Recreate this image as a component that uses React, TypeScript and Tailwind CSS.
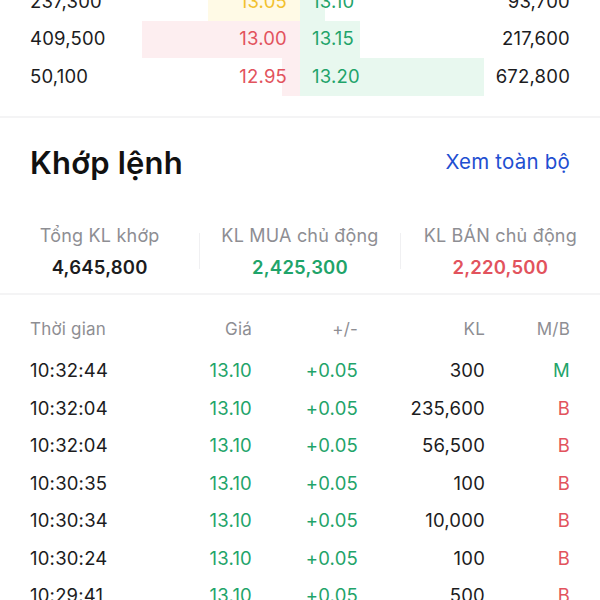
import React from 'react';

type BookRow = {
  bidVol: string;
  bid: string;
  ask: string;
  askVol: string;
  bidBar: number;
  askBar: number;
  bidTone: 'red' | 'yellow';
};

const book: BookRow[] = [
  { bidVol: '237,300', bid: '13.05', ask: '13.10', askVol: '93,700', bidBar: 92, askBar: 25, bidTone: 'yellow' },
  { bidVol: '409,500', bid: '13.00', ask: '13.15', askVol: '217,600', bidBar: 158, askBar: 60, bidTone: 'red' },
  { bidVol: '50,100', bid: '12.95', ask: '13.20', askVol: '672,800', bidBar: 18, askBar: 184, bidTone: 'red' },
];

const trades = [
  { time: '10:32:44', vol: '300', side: 'M' },
  { time: '10:32:04', vol: '235,600', side: 'B' },
  { time: '10:32:04', vol: '56,500', side: 'B' },
  { time: '10:30:35', vol: '100', side: 'B' },
  { time: '10:30:34', vol: '10,000', side: 'B' },
  { time: '10:30:24', vol: '100', side: 'B' },
  { time: '10:29:41', vol: '500', side: 'B' },
];

function OrderBook() {
  return (
    <div className="-mt-[17px] pb-[20px]">
      {book.map((r, i) => (
        <div key={i} className="flex h-[37.5px] text-[18.5px]">
          {/* bid side */}
          <div className="relative flex w-1/2 items-center justify-between pl-[30px] pr-[13px]">
            <div
              className={`absolute right-0 top-0 h-full ${r.bidTone === 'yellow' ? 'bg-[#fffae6]' : 'bg-[#fdeef0]'}`}
              style={{ width: r.bidBar }}
            />
            <span className="relative text-[#1c1c1e]">{r.bidVol}</span>
            <span className={`relative ${r.bidTone === 'yellow' ? 'text-[#f2c12e]' : 'text-[#e2535d]'}`}>{r.bid}</span>
          </div>
          {/* ask side */}
          <div className="relative flex w-1/2 items-center justify-between pl-[12px] pr-[30px]">
            <div className="absolute left-0 top-0 h-full bg-[#e8f8ef]" style={{ width: r.askBar }} />
            <span className="relative text-[#1fa46a]">{r.ask}</span>
            <span className="relative text-[#1c1c1e]">{r.askVol}</span>
          </div>
        </div>
      ))}
    </div>
  );
}

function Stat({ label, value, color }: { label: string; value: string; color: string }) {
  return (
    <div className="flex flex-1 flex-col items-center gap-[7px]">
      <span className="text-[18px] leading-[24px] text-[#8e8e93]">{label}</span>
      <span className={`text-[18.5px] leading-[24px] font-semibold ${color}`}>{value}</span>
    </div>
  );
}

export default function App() {
  return (
    <div className="h-[600px] w-[600px] overflow-hidden bg-white font-['Inter',sans-serif] tracking-[0.2px]">
      <OrderBook />
      <div className="h-[2px] bg-[#f4f4f5]" />

      <div className="flex items-center justify-between px-[30px] pt-[27px]">
        <h2 className="text-[31px] font-semibold leading-[36px] text-[#111]">Khớp lệnh</h2>
        <span className="text-[20.5px] text-[#1f4fd1]">Xem toàn bộ</span>
      </div>

      <div className="flex items-center pb-[14px] pt-[43px]">
        <Stat label="Tổng KL khớp" value="4,645,800" color="text-[#1c1c1e]" />
        <div className="h-[36px] w-px bg-[#f0f0f2]" />
        <Stat label="KL MUA chủ động" value="2,425,300" color="text-[#1fa46a]" />
        <div className="h-[36px] w-px bg-[#f0f0f2]" />
        <Stat label="KL BÁN chủ động" value="2,220,500" color="text-[#e2535d]" />
      </div>
      <div className="h-[2px] bg-[#f4f4f5]" />

      <div className="px-[30px] pt-[22px]">
        <div className="grid h-[24px] grid-cols-[1fr_100px_106px_127px_85px] items-center text-[17px] text-[#8e8e93]">
          <span>Thời gian</span>
          <span className="text-right">Giá</span>
          <span className="text-right">+/-</span>
          <span className="text-right">KL</span>
          <span className="text-right">M/B</span>
        </div>
        <div className="pt-[12px]">
          {trades.map((t, i) => (
            <div
              key={i}
              className="grid h-[37.5px] grid-cols-[1fr_100px_106px_127px_85px] items-center text-[18.5px]"
            >
              <span className="text-[#1c1c1e]">{t.time}</span>
              <span className="text-right text-[#1fa46a]">13.10</span>
              <span className="text-right text-[#1fa46a]">+0.05</span>
              <span className="text-right text-[#1c1c1e]">{t.vol}</span>
              <span className={`text-right ${t.side === 'M' ? 'text-[#1fa46a]' : 'text-[#e2535d]'}`}>{t.side}</span>
            </div>
          ))}
        </div>
      </div>
    </div>
  );
}
